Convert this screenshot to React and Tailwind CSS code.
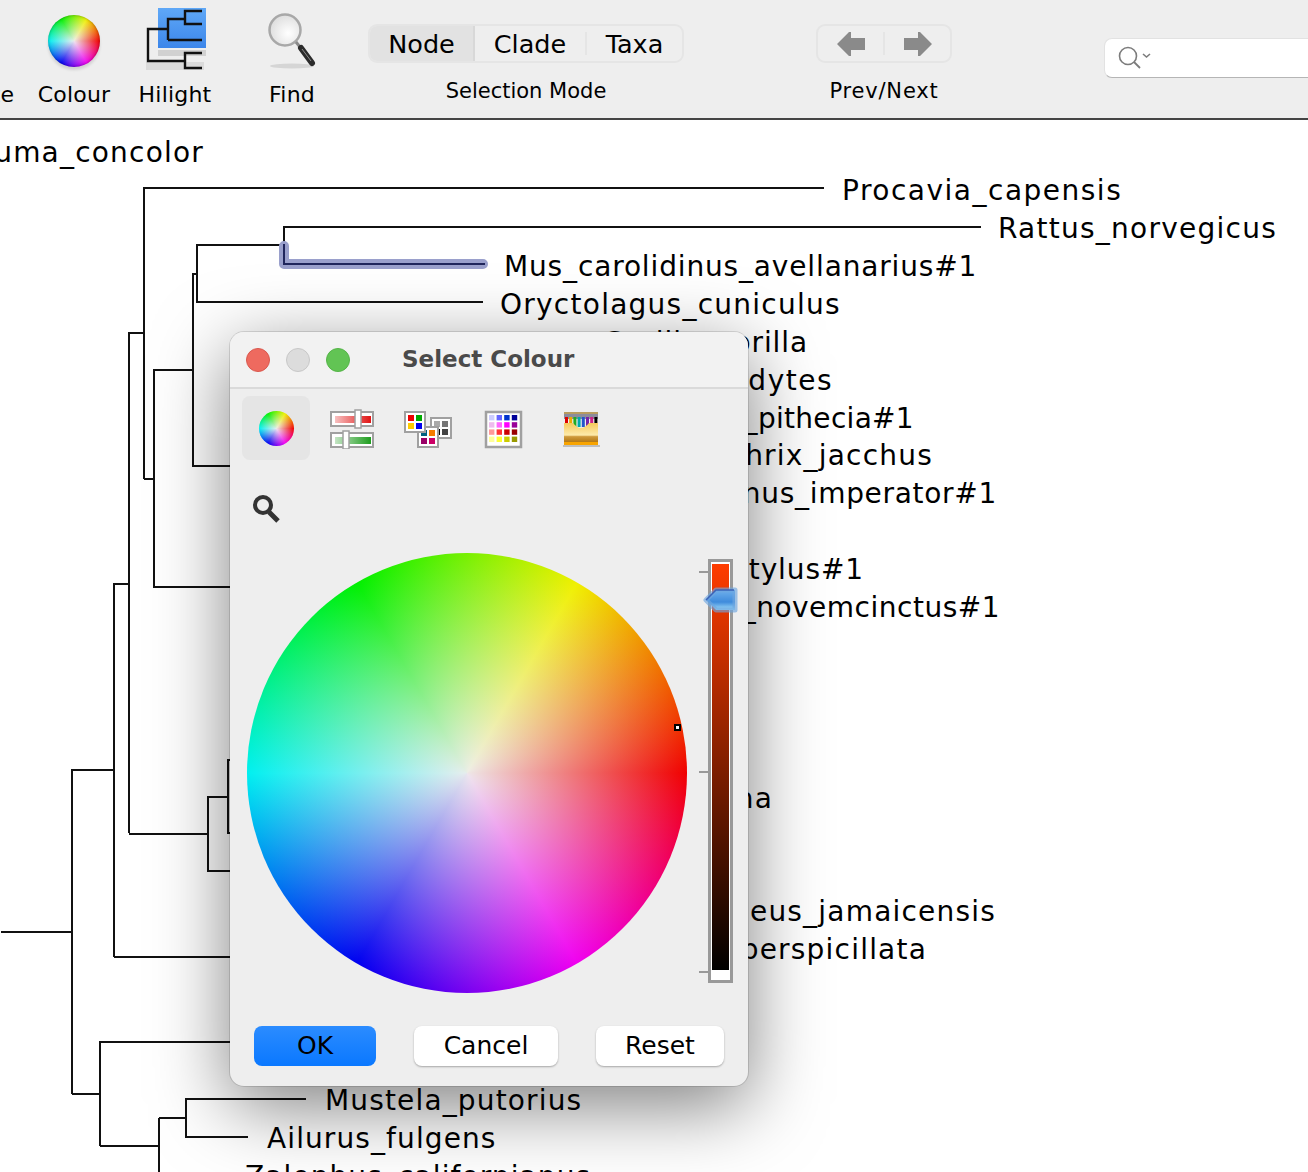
import React from "react";

const FONT = "font-['DejaVu_Sans','Liberation_Sans',sans-serif]";

// tree branches, in page coordinates
const branches = [
  "M823 188H143V479", "M143 333H128V833", "M128 584H113V957", "M113 770H71V1094", "M0 932H71",
  "M980 227H283V265", "M283 245H196V302H482", "M196 274H192V466H230", "M192 370H153V587H230", "M143 479H153",
  "M128 834H207", "M230 871H207V797H227", "M230 760H227V833H230", "M113 957H230",
  "M230 1042H99V1146", "M71 1094H99", "M99 1146H158", "M158 1118V1172", "M158 1118H185", "M305 1099H185V1137H247",
];

const labels = [
  { text: "Puma_concolor", pos: "right-[1104px] top-[16px] tracking-[1.2px]" },
  { text: "Procavia_capensis", pos: "left-[842px] top-[54px] tracking-[1.5px]" },
  { text: "Rattus_norvegicus", pos: "left-[998px] top-[92px] tracking-[1.25px]" },
  { text: "Mus_carolidinus_avellanarius#1", pos: "left-[504px] top-[130px] tracking-[0.85px]" },
  { text: "Oryctolagus_cuniculus", pos: "left-[500px] top-[168px] tracking-[1.25px]" },
  { text: "Gorilla_gorilla", pos: "right-[500px] top-[206px] tracking-[0.9px]" },
  { text: "Pan_troglodytes", pos: "right-[475px] top-[244px] tracking-[1.5px]" },
  { text: "Pithecia_pithecia#1", pos: "right-[394px] top-[282px] tracking-[0.3px]" },
  { text: "Callithrix_jacchus", pos: "right-[375px] top-[319px] tracking-[1.2px]" },
  { text: "Saguinus_imperator#1", pos: "right-[311px] top-[357px] tracking-[0.7px]" },
  { text: "Bradypus_tridactylus#1", pos: "right-[444px] top-[433px] tracking-[0.9px]" },
  { text: "Dasypus_novemcinctus#1", pos: "right-[308px] top-[471px] tracking-[0.5px]" },
  { text: "Vicugna_vicugna", pos: "right-[535px] top-[662px] tracking-[1.2px]" },
  { text: "Artibeus_jamaicensis", pos: "right-[312px] top-[775px] tracking-[1.2px]" },
  { text: "Carollia_perspicillata", pos: "right-[381px] top-[813px] tracking-[1.2px]" },
  { text: "Mustela_putorius", pos: "left-[325px] top-[964px] tracking-[1.15px]" },
  { text: "Ailurus_fulgens", pos: "left-[267px] top-[1002px] tracking-[1.1px]" },
  { text: "Zalophus_californianus", pos: "left-[245px] top-[1040px] tracking-[1.1px]" },
];

function Wheel({ className }) {
  return (
    <div className={`relative rounded-full bg-[conic-gradient(from_90deg,#f00000,#f000f0,#0000f0,#00f0f0,#00f000,#f0f000,#f00000)] ${className}`}>
      <div className="absolute inset-0 rounded-full bg-[radial-gradient(circle_closest-side,rgba(238,238,238,0.97)_0%,rgba(238,238,238,0)_100%)]" />
    </div>
  );
}

function ToolItem({ label, width, children }) {
  return (
    <div className={`flex flex-col items-center shrink-0 ${width}`}>
      <div className="h-[81px] w-full flex items-start justify-center">{children}</div>
      <span className="text-[22px] leading-[28px] tracking-[0.2px] whitespace-nowrap">{label}</span>
    </div>
  );
}

function HilightIcon() {
  return (
    <svg width="62" height="64" viewBox="0 0 62 64" className="mt-[8px] ml-[4px]">
      <defs>
        <linearGradient id="hl" x1="0" y1="0" x2="0" y2="1">
          <stop offset="0" stopColor="#5fa8f7" />
          <stop offset="1" stopColor="#3c86ea" />
        </linearGradient>
      </defs>
      <rect x="12" y="42" width="48" height="6" fill="#000" opacity="0.12" />
      <rect x="0" y="54" width="58" height="8" fill="#000" opacity="0.08" />
      <rect x="12" y="0" width="48" height="40" fill="url(#hl)" />
      <path d="M22 32V11H39M56 3H39V16H56M56 32H22M22 21H2V53H39M56 45H39V60H56" fill="none" stroke="#111" strokeWidth="2.4" />
    </svg>
  );
}

function FindIcon() {
  return (
    <svg width="56" height="62" viewBox="0 0 56 62" className="mt-[10px]">
      <defs>
        <radialGradient id="lens" cx="0.6" cy="0.6" r="0.7">
          <stop offset="0" stopColor="#ffffff" />
          <stop offset="1" stopColor="#d9d9d9" />
        </radialGradient>
      </defs>
      <ellipse cx="28" cy="56" rx="22" ry="2.5" fill="#000" opacity="0.1" />
      <circle cx="21" cy="20" r="15.5" fill="url(#lens)" stroke="#a8a8a8" strokeWidth="2.5" />
      <path d="M32 32L36 37" stroke="#8a8a8a" strokeWidth="3" />
      <path d="M37 38L48 53" stroke="#2b2b2b" strokeWidth="6" strokeLinecap="round" />
      <path d="M38 39L47 51" stroke="#8d8d8d" strokeWidth="1" />
    </svg>
  );
}

function SliderIcon() {
  return (
    <svg width="46" height="40" viewBox="0 0 46 40">
      <defs>
        <linearGradient id="sr">
          <stop offset="0" stopColor="#f7c0c0" />
          <stop offset="1" stopColor="#e01515" />
        </linearGradient>
        <linearGradient id="sg">
          <stop offset="0" stopColor="#c4e4c4" />
          <stop offset="1" stopColor="#1f9e1f" />
        </linearGradient>
      </defs>
      <rect x="1" y="3" width="42" height="14" fill="#fff" stroke="#a0a0a0" strokeWidth="2" />
      <rect x="5" y="7" width="36" height="7" fill="url(#sr)" />
      <rect x="1" y="24" width="42" height="14" fill="#fff" stroke="#a0a0a0" strokeWidth="2" />
      <rect x="5" y="28" width="36" height="7" fill="url(#sg)" />
      <rect x="25" y="1" width="6" height="18" fill="#fff" stroke="#a0a0a0" strokeWidth="1.5" />
      <rect x="13" y="22" width="6" height="18" fill="#fff" stroke="#a0a0a0" strokeWidth="1.5" />
    </svg>
  );
}

function Swatches({ x, y, colors }) {
  return (
    <g>
      <rect x={x} y={y} width="20" height="20" fill="#fff" stroke="#a0a0a0" strokeWidth="2" />
      {colors.map((c, i) => (
        <rect key={i} x={x + 3 + (i % 2) * 8} y={y + 3 + Math.floor(i / 2) * 8} width="6" height="6" fill={c} />
      ))}
    </g>
  );
}

function PaletteIcon() {
  return (
    <svg width="50" height="40" viewBox="0 0 50 40">
      <Swatches x={27} y={9} colors={["#aaaaaa", "#777777", "#000000", "#444444"]} />
      <Swatches x={14} y={18} colors={["#00617f", "#f57c00", "#990066", "#cc0066"]} />
      <Swatches x={1} y={3} colors={["#ee0000", "#00aa00", "#ffcc00", "#0000ee"]} />
    </svg>
  );
}

const gridColors = [
  "#ccccff", "#6666ff", "#0033cc", "#000099",
  "#eebbee", "#ff66ff", "#ff00ff", "#990099",
  "#ff9999", "#ff3333", "#cc0000", "#990000",
  "#ffff99", "#ffff33", "#cccc00", "#999900",
];

function GridIcon() {
  return (
    <svg width="40" height="40" viewBox="0 0 40 40">
      <rect x="2" y="3" width="35" height="35" fill="#fff" stroke="#a0a0a0" strokeWidth="2.5" />
      {gridColors.map((c, i) => (
        <rect key={i} x={5 + (i % 4) * 7.6} y={6 + Math.floor(i / 4) * 7.2} width="5.4" height="5.4" fill={c} />
      ))}
    </svg>
  );
}

const crayons = ["#dd0000", "#eeaa00", "#22aa22", "#00aaaa", "#2255cc", "#7722aa", "#cc2288", "#000000"];

function CrayonIcon() {
  return (
    <svg width="40" height="40" viewBox="0 0 40 40">
      <defs>
        <linearGradient id="box" x1="0" y1="0" x2="0" y2="1">
          <stop offset="0" stopColor="#f6c95c" />
          <stop offset="0.55" stopColor="#fdeaaa" />
          <stop offset="0.62" stopColor="#cf9a3c" />
          <stop offset="0.85" stopColor="#b57a18" />
          <stop offset="0.86" stopColor="#f8a400" />
          <stop offset="1" stopColor="#f8a400" />
        </linearGradient>
      </defs>
      <rect x="2" y="3" width="34" height="7" fill="#8c8c9c" />
      <rect x="2" y="3" width="34" height="2" fill="#b89c60" />
      {crayons.map((c, i) => (
        <rect key={i} x={3 + i * 4.2} y="8" width="3" height="10" fill={c} />
      ))}
      <path d="M2 14H11Q19 24 27 14H36V36H2Z" fill="url(#box)" />
      <rect x="1" y="36" width="37" height="2" fill="#000" opacity="0.2" />
    </svg>
  );
}

function DialogButton({ label, className }) {
  return (
    <button className={`h-[40px] rounded-[8px] pb-[2px] text-[25px] leading-none text-black ${className}`}>{label}</button>
  );
}

export default function App() {
  return (
    <div className={`relative w-[1308px] h-[1172px] overflow-hidden bg-white text-black flex flex-col ${FONT}`}>
      {/* toolbar */}
      <div className="h-[120px] shrink-0 bg-[#eeeeee] border-b-2 border-[#444444] flex items-start">
        <ToolItem label="Annotate" width="w-[94px] ml-[-84px]">
          <span />
        </ToolItem>
        <ToolItem label="Colour" width="w-[88px] ml-[20px]">
          <div className="relative mt-[15px]">
            <Wheel className="w-[52px] h-[52px] shadow-[inset_0_0_3px_rgba(0,0,0,0.35),0_3px_3px_rgba(0,0,0,0.12)]" />
          </div>
        </ToolItem>
        <ToolItem label="Hilight" width="w-[114px]">
          <HilightIcon />
        </ToolItem>
        <ToolItem label="Find" width="w-[120px]">
          <FindIcon />
        </ToolItem>

        <div className="ml-[16px] w-[316px] shrink-0 pt-[24px] flex flex-col items-center">
          <div className="w-full h-[39px] flex rounded-[9px] border-2 border-[#e5e5e5] text-[25.5px] leading-none overflow-hidden">
            <div className="w-[105px] pt-[2px] bg-[#e2e2e2] border-r-2 border-[#d8d8d8] flex items-center justify-center">Node</div>
            <div className="w-[110px] pt-[2px] flex items-center justify-center">Clade</div>
            <div className="flex-1 my-[6px] pt-[2px] border-l-2 border-[#e5e5e5] flex items-center justify-center">Taxa</div>
          </div>
          <span className="mt-[14px] text-[21px] leading-[28px]">Selection Mode</span>
        </div>

        <div className="ml-[132px] w-[136px] shrink-0 pt-[24px] flex flex-col items-center">
          <div className="w-full h-[39px] flex items-center rounded-[9px] border-2 border-[#e5e5e5]">
            <div className="w-[65px] flex justify-center">
              <svg width="28" height="24" viewBox="0 0 28 24"><path d="M0 12L12 0H14V6H28V18H14V24H12Z" fill="#8a8a8a" /></svg>
            </div>
            <div className="h-[23px] border-l-2 border-[#e5e5e5]" />
            <div className="flex-1 flex justify-center">
              <svg width="28" height="24" viewBox="0 0 28 24"><path d="M28 12L16 0H14V6H0V18H14V24H16Z" fill="#8a8a8a" /></svg>
            </div>
          </div>
          <span className="mt-[14px] text-[21px] leading-[28px] tracking-[0.8px]">Prev/Next</span>
        </div>

        <div className="ml-[152px] mt-[38px] w-[260px] h-[40px] shrink-0 bg-white rounded-[8px] border border-[#e2e2e2] border-b-[#b5b5b5] flex items-center pl-[12px]">
          <svg width="36" height="26" viewBox="0 0 36 26">
            <circle cx="11" cy="11" r="8.5" fill="none" stroke="#7c7c7c" strokeWidth="1.6" />
            <path d="M17 17L23 23" stroke="#7c7c7c" strokeWidth="1.8" />
            <path d="M26 9L29.5 12L33 9" fill="none" stroke="#7c7c7c" strokeWidth="1.6" />
          </svg>
        </div>
      </div>

      {/* tree canvas */}
      <div className="relative flex-1 text-[28px] leading-[34px]">
        <svg className="absolute inset-0" width="1308" height="1052" viewBox="0 120 1308 1052">
          <g fill="none" stroke="#111111" strokeWidth="2" transform="translate(1 0)">
            {branches.map((d) => (
              <path key={d} d={d} />
            ))}
          </g>
          <path d="M284 246V264H483" fill="none" stroke="#9aa0cc" strokeWidth="10" strokeLinecap="round" strokeLinejoin="round" />
          <path d="M284 244V264H485" fill="none" stroke="#20265c" strokeWidth="2" />
        </svg>
        {labels.map((l) => (
          <span key={l.text} className={`absolute whitespace-nowrap ${l.pos}`}>{l.text}</span>
        ))}
      </div>

      {/* Select Colour dialog */}
      <div className="absolute left-[230px] top-[332px] w-[518px] h-[754px] rounded-[14px] bg-[#eeeeee] shadow-[0_0_0_1px_rgba(0,0,0,0.12),0_20px_75px_rgba(0,0,0,0.5)] overflow-hidden">
        <div className="relative h-[57px] bg-[#f2f2f2] border-b-2 border-[#dadada] flex items-center pl-[16px] gap-[16px]">
          <span className="w-[24px] h-[24px] rounded-full bg-[#ee6a5f] border border-[#d9584e]" />
          <span className="w-[24px] h-[24px] rounded-full bg-[#dcdcdc] border border-[#c8c8c8]" />
          <span className="w-[24px] h-[24px] rounded-full bg-[#62c454] border border-[#55b548]" />
          <span className="ml-[36px] text-[23px] font-bold text-[#4a4a4a]">Select Colour</span>
        </div>

        <div className="flex items-center h-[64px] mt-[7px] ml-[12px]">
          <div className="w-[68px] h-[64px] rounded-[8px] bg-[#e5e5e5] flex items-center justify-center">
            <Wheel className="w-[35px] h-[35px]" />
          </div>
          <div className="ml-[20px] mt-[2px]"><SliderIcon /></div>
          <div className="ml-[28px] mt-[2px]"><PaletteIcon /></div>
          <div className="ml-[30px] mt-[2px]"><GridIcon /></div>
          <div className="ml-[38px] mt-[2px]"><CrayonIcon /></div>
        </div>

        <svg width="30" height="32" viewBox="0 0 30 32" className="ml-[22px] mt-[33px]">
          <circle cx="11" cy="12" r="8" fill="none" stroke="#333333" strokeWidth="4" />
          <path d="M17 19L26 28" stroke="#333333" strokeWidth="5" />
        </svg>

        <div className="flex items-start ml-[17px] mt-[28px]">
          <Wheel className="w-[440px] h-[440px] shrink-0" />
          <div className="relative ml-[21px] mt-[6px] w-[25px] h-[424px] border-[3px] border-[#999999] bg-white">
            <div className="mx-[1px] mt-[2px] h-[406px] bg-[linear-gradient(to_bottom,#ff3c00,#000000)]" />
            <div className="absolute left-[-12px] top-[9px] w-[9px] h-[2px] bg-[#999999]" />
            <div className="absolute left-[-12px] top-[209px] w-[9px] h-[2px] bg-[#999999]" />
            <div className="absolute left-[-12px] top-[409px] w-[9px] h-[2px] bg-[#999999]" />
            <svg width="36" height="32" viewBox="0 0 36 32" className="absolute left-[-8px] top-[22px]">
              <defs>
                <linearGradient id="thumb" x1="0" y1="0" x2="0" y2="1">
                  <stop offset="0" stopColor="#6fb0ec" />
                  <stop offset="0.6" stopColor="#3f8bdc" />
                  <stop offset="1" stopColor="#a5e0fb" />
                </linearGradient>
              </defs>
              <path d="M3 16L13 6H32V26H13Z" fill="url(#thumb)" stroke="#6ea6de" strokeOpacity="0.65" strokeWidth="5" strokeLinejoin="round" />
              <path d="M3 16L13 6H31" fill="none" stroke="#3a62b8" strokeWidth="1.5" />
            </svg>
          </div>
          <div className="absolute left-[444px] top-[392px] w-[7px] h-[7px] border-2 border-black bg-white" />
        </div>

        <div className="absolute left-0 right-0 top-[694px] flex">
          <DialogButton label="OK" className="ml-[24px] w-[122px] bg-[linear-gradient(to_bottom,#2b8cff,#0a78ff)]" />
          <DialogButton label="Cancel" className="ml-[38px] w-[144px] bg-white shadow-[0_1px_2px_rgba(0,0,0,0.3)]" />
          <DialogButton label="Reset" className="ml-[38px] w-[128px] bg-white shadow-[0_1px_2px_rgba(0,0,0,0.3)]" />
        </div>
      </div>
    </div>
  );
}
